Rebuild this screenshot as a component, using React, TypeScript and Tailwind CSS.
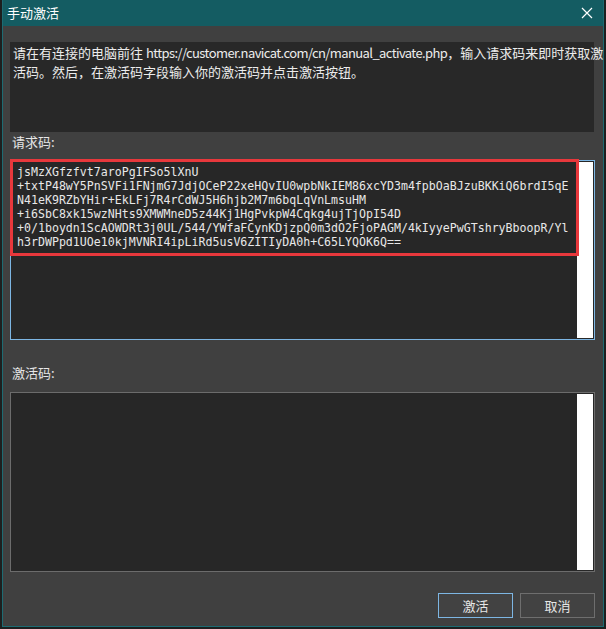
import React from "react";

// --- text data ---
const REQUEST_LINES = [
  "jsMzXGfzfvt7aroPgIFSo5lXnU",
  "+txtP48wY5PnSVFi1FNjmG7JdjOCeP22xeHQvIU0wpbNkIEM86xcYD3m4fpbOaBJzuBKKiQ6brdI5qE",
  "N41eK9RZbYHir+EkLFj7R4rCdWJ5H6hjb2M7m6bqLqVnLmsuHM",
  "+i6SbC8xk15wzNHts9XMWMneD5z44Kj1HgPvkpW4Cqkg4ujTjOpI54D",
  "+0/1boydn1ScAOWDRt3j0UL/544/YWfaFCynKDjzpQ0m3dO2FjoPAGM/4kIyyePwGTshryBboopR/Yl",
  "h3rDWPpd1UOe10kjMVNRI4ipLiRd5usV6ZITIyDA0h+C65LYQOK6Q==",
];

const uiFont = { fontFamily: '"Noto Sans CJK SC", "Noto Sans", sans-serif' };

// --- Close icon ---
const CloseIcon = () => (
  <svg width="12" height="12" viewBox="0 0 12 12" className="block">
    <path d="M1 1 L11 11 M11 1 L1 11" stroke="#ffffff" strokeWidth="1.2" fill="none" />
  </svg>
);

// --- Fake multi-line edit box ---
const EditBox = ({
  focused,
  children,
}: {
  focused?: boolean;
  children?: React.ReactNode;
}) => (
  <div
    className={`relative flex h-[180px] w-[585px] border bg-[#272727] ${
      focused ? "border-[#7db6e3]" : "border-[#6c6c6c]"
    }`}
  >
    <div className="flex-1 overflow-hidden">{children}</div>
    <div className="my-[1px] mr-[1px] w-[16px] bg-white" />
  </div>
);

const DialogButton = ({ label, focused }: { label: string; focused?: boolean }) => (
  <button
    className={`h-[25px] w-[75px] border bg-[#424242] text-[13px] text-[#e6e6e6] ${
      focused ? "border-[#7db6e3]" : "border-[#6e6e6e]"
    }`}
  >
    {label}
  </button>
);

export default function App() {
  return (
    <main className="h-[629px] w-[606px] overflow-hidden bg-[#1d1f1f]" style={uiFont}>
      <div className="ml-[2px] flex h-[627px] w-[602px] flex-col border-x border-b border-[#1d6b72] bg-[#404040]">
        {/* title bar */}
        <div className="flex h-[26px] shrink-0 items-center justify-between bg-[#145c62] pl-[4px] pr-[10px]">
          <span className="text-[13px] text-white">手动激活</span>
          <CloseIcon />
        </div>

        <div className="flex flex-col pl-[7px] pt-[16px]">
          {/* description */}
          <div className="h-[90px] w-[584px] bg-[#282828] px-[3px] pt-[1px] text-[13px] leading-[19px] text-[#ececec]">
            <div className="whitespace-nowrap">
              请在有连接的电脑前往{" "}
              <span className="tracking-[-0.6px]">https://customer.navicat.com/cn/manual_activate.php</span>
              ，输入请求码来即时获取激
            </div>
            <div className="whitespace-nowrap">活码。然后，在激活码字段输入你的激活码并点击激活按钮。</div>
          </div>

          <div className="mt-[2px] h-[26px] pl-[2px] text-[13px] leading-[16px] text-[#e6e6e6]">
            请求码:
          </div>

          <EditBox focused>
            <div
              className="pl-[6px] pt-[4px] text-[11.6px] leading-[14px] text-[#e8e8e8] whitespace-pre"
              style={{ fontFamily: '"DejaVu Sans Mono", "Liberation Mono", monospace' }}
            >
              {REQUEST_LINES.map((line) => (
                <div key={line}>{line}</div>
              ))}
            </div>
            {/* red highlight */}
            <div className="pointer-events-none absolute left-[-1px] top-[-2px] h-[97px] w-[569px] border-[3px] border-[#e8383c]" />
          </EditBox>

          <div className="mt-[25px] h-[27px] pl-[2px] text-[13px] leading-[16px] text-[#e6e6e6]">
            激活码:
          </div>

          <EditBox />

          <div className="mt-[21px] flex w-[585px] justify-end gap-[7px]">
            <DialogButton label="激活" focused />
            <DialogButton label="取消" />
          </div>
        </div>
      </div>
    </main>
  );
}
